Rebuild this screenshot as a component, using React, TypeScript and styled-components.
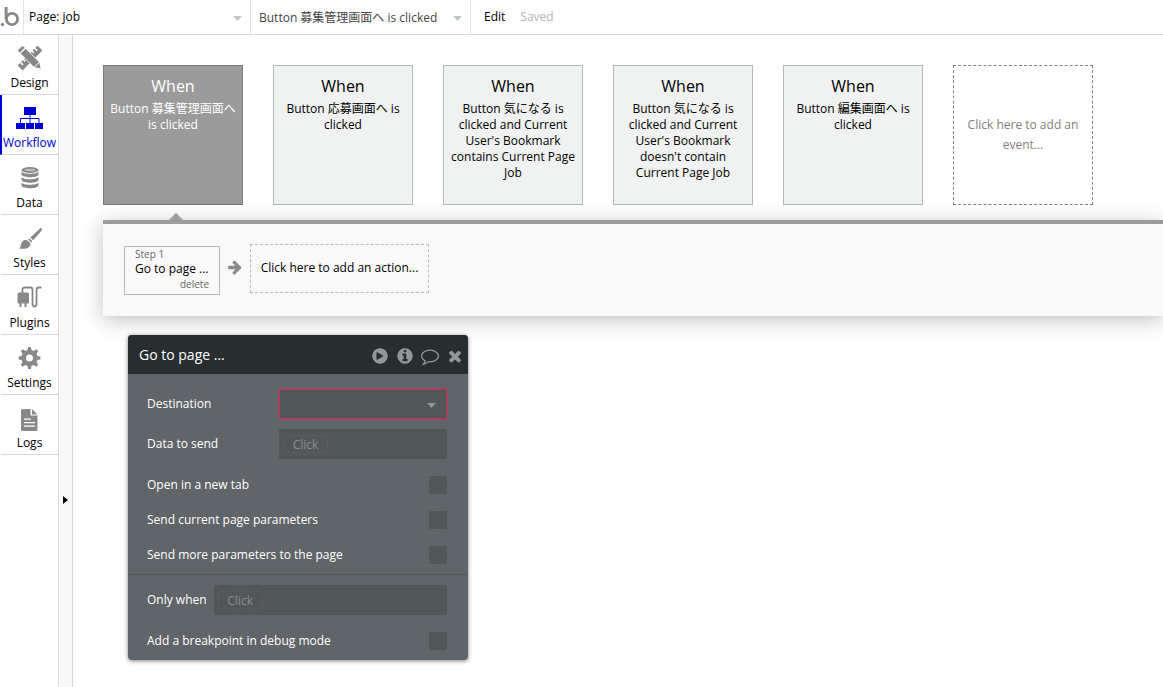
import React from "react";
import styled, { createGlobalStyle, css } from "styled-components";

const GlobalStyle = createGlobalStyle`
  *, *::before, *::after { box-sizing: border-box; }
  body {
    margin: 0;
    background: #fff;
    color: #000;
    font: 12px/16px "Open Sans", "Noto Sans CJK JP", sans-serif;
  }
  button, input, select { font: inherit; color: inherit; margin: 0; }
  button { padding: 0; border: 0; background: none; cursor: pointer; }
  svg { display: block; }
`;

const Page = styled.div`
  display: flex;
  flex-direction: column;
  min-height: 100vh;
`;

/* Top bar */

const TopBar = styled.header`
  display: flex;
  align-items: stretch;
  height: 35px;
  border-bottom: 1px solid #d7d7d7;
`;

const LogoLink = styled.a`
  width: 24px;
  padding-top: 7px;
  border-right: 1px solid #e5e5e5;
`;

const Picker = styled.div<{ $width: number }>`
  display: flex;
  align-items: center;
  position: relative;
  width: ${(p) => p.$width}px;
  border-right: 1px solid #e5e5e5;
`;

const PickerSelect = styled.select<{ $muted?: boolean }>`
  appearance: none;
  width: 100%;
  height: 100%;
  padding: ${(p) => (p.$muted ? "2px 24px 0 8px" : "0 24px 0 5px")};
  border: 0;
  background: transparent;
  color: ${(p) => (p.$muted ? "#444" : "#000")};
`;

const PickerCaret = styled.svg`
  position: absolute;
  right: 8px;
  top: 16px;
  pointer-events: none;
`;

const EditButton = styled.button`
  padding: 0 15px 0 13px;
`;

const SaveState = styled.span`
  align-self: center;
  color: #b3b3b3;
`;

/* Side navigation */

const Body = styled.div`
  display: flex;
  flex: 1;
`;

const SideNav = styled.nav`
  flex: none;
  width: 59px;
  border-right: 1px solid #d7d7d7;
`;

const NavItem = styled.a<{ $active?: boolean }>`
  display: flex;
  flex-direction: column;
  align-items: center;
  justify-content: space-between;
  height: 60px;
  padding: 9px 1px 3px 0;
  border-bottom: 1px solid #d7d7d7;
  border-left: 2px solid ${(p) => (p.$active ? "#0000d5" : "transparent")};
  color: ${(p) => (p.$active ? "#0000d5" : "#000")};
  text-decoration: none;
  white-space: nowrap;

  svg { color: ${(p) => (p.$active ? "#0000d5" : "#888")}; }
`;

const Gutter = styled.button`
  display: flex;
  flex: none;
  align-items: flex-start;
  width: 14px;
  padding: 461px 0 0 4px;
  border-right: 1px solid #d7d7d7;
  background: #f8f8f8;
`;

/* Workflow canvas */

const Canvas = styled.main`
  flex: 1;
  min-width: 0;
  padding: 30px 0 27px 30px;
  overflow: hidden;
`;

const EventRow = styled.div`
  display: flex;
  gap: 30px;
`;

const eventBox = css`
  flex: none;
  width: 140px;
  height: 140px;
  text-align: center;
`;

const EventCard = styled.button<{ $selected?: boolean }>`
  ${eventBox}
  display: flex;
  flex-direction: column;
  align-items: center;
  gap: 5px;
  padding: 10px 4px;
  border: 1px solid ${(p) => (p.$selected ? "#7b7b7b" : "#b0babc")};
  background: ${(p) => (p.$selected ? "#9b9b9b" : "#f0f2f1")};
  color: ${(p) => (p.$selected ? "#fff" : "#000")};
`;

const EventTitle = styled.span`
  font-size: 16px;
  line-height: 20px;
`;

const AddEvent = styled.button`
  ${eventBox}
  padding: 0 12px;
  border: 1px dashed #808080;
  color: #808080;
  line-height: 20px;
`;

const Actions = styled.section`
  position: relative;
  display: flex;
  align-items: flex-start;
  height: 96px;
  margin-top: 15px;
  padding: 20px 20px 0 21px;
  border-top: 4px solid #9b9b9b;
  background: #f9f9f9;
  box-shadow: 0 4px 20px rgba(0, 0, 0, 0.25);
`;

const Pointer = styled.svg`
  position: absolute;
  left: 66px;
  top: -11px;
`;

const Step = styled.div`
  display: flex;
  flex-direction: column;
  width: 96px;
  height: 49px;
  margin-top: 2px;
  padding: 0 10px;
  border: 1px solid #b0babc;
`;

const StepNote = styled.span`
  color: #666;
  font-size: 10px;
  line-height: 14px;
`;

const StepName = styled.button`
  text-align: left;
  white-space: nowrap;
`;

const DeleteButton = styled.button`
  align-self: flex-end;
  color: #666;
  font-size: 10px;
  line-height: 14px;
`;

const AddAction = styled.button`
  width: 179px;
  height: 49px;
  padding-bottom: 2px;
  border: 1px dashed #b5bdbd;
  white-space: nowrap;
`;

/* Property editor */

const Editor = styled.section`
  width: 340px;
  margin: 19px 0 0 25px;
  border-radius: 4px;
  overflow: hidden;
  background: #606569;
  color: #fff;
  box-shadow: 0 1px 4px rgba(0, 0, 0, 0.5);
`;

const EditorHeader = styled.header`
  display: flex;
  align-items: center;
  height: 39px;
  padding: 0 4px 0 11px;
  background: #272e30;
`;

const EditorTitle = styled.h2`
  flex: 1;
  margin: 0;
  font-size: 14px;
  font-weight: 400;
  line-height: 20px;
`;

const HeaderButtons = styled.div`
  display: flex;
  gap: 7px;
  padding-top: 2px;
  color: #8f999b;
`;

const Group = styled.div`
  padding: 15px 21px 2px 19px;
  & + & { padding-top: 10px; border-top: 1px solid #54595c; }
`;

const Row = styled.div`
  display: flex;
  align-items: center;
  justify-content: space-between;
  gap: 7px;
`;

const FieldRow = styled(Row)`
  height: 30px;
  margin-bottom: 8px;
  & + & { margin-top: 10px; }
`;

const TickRow = styled(Row)`
  height: 35px;
`;

const Field = styled.div<{ $invalid?: boolean; $fill?: boolean }>`
  position: relative;
  display: flex;
  align-items: center;
  ${(p) => (p.$fill ? "flex: 1;" : "width: 168px;")}
  height: 30px;
  padding: 0 4px;
  border: ${(p) => (p.$invalid ? "1px solid #f0184c" : "0")};
  border-radius: 1px;
  background: #515659;
`;

const FieldSelect = styled.select`
  appearance: none;
  width: 100%;
  height: 100%;
  border: 0;
  background: transparent;
`;

const FieldCaret = styled.svg`
  position: absolute;
  right: 10px;
  top: 13px;
  pointer-events: none;
`;

const Expression = styled.input`
  width: 45px;
  height: 18px;
  padding: 0;
  border: 1px dashed #5c6164;
  border-radius: 3px;
  background: transparent;
  text-align: center;
  &::placeholder { color: #8c8f91; opacity: 1; }
`;

const Tick = styled.input`
  appearance: none;
  width: 18px;
  height: 18px;
  border-radius: 1px;
  background: #515659;
  position: relative;
  &:checked::after {
    content: "✓";
    position: absolute;
    inset: 0;
    text-align: center;
  }
`;

const Glyph = ({ d, size = 18 }: { d: string; size?: number }) => (
  <svg width={size} height={size} viewBox="0 0 1792 1792" fill="currentColor" aria-hidden="true">
    <path d={d} />
  </svg>
);

const disc =
  "q0 209-103 385.5t-279.5 279.5-385.5 103-385.5-103-279.5-279.5-103-385.5 103-385.5 279.5-279.5 385.5-103 385.5 103 279.5 279.5 103 385.5z";
const glyphs = {
  play: "M1216 896q0-37-32-55l-544-320q-31-19-64-1-32 19-32 56v640q0 37 32 56 16 8 32 8 17 0 32-9l544-320q32-18 32-55zm448 0" + disc,
  info:
    "M1152 1376v-160q0-14-9-23t-23-9h-96v-512q0-14-9-23t-23-9h-320q-14 0-23 9t-9 23v160q0 14 9 23t23 9h96v320h-96q-14 0-23 9t-9 23v160q0 14 9 23t23 9h448q14 0 23-9t9-23zm-128-896v-160q0-14-9-23t-23-9h-192q-14 0-23 9t-9 23v160q0 14 9 23t23 9h192q14 0 23-9t9-23zm640 416" + disc,
  comment:
    "M896 384q-204 0-381.5 69.5t-282 187.5-104.5 255q0 112 71.5 213.5t201.5 175.5l87 50-27 96q-24 91-70 172 152-63 275-171l43-38 57 6q69 8 130 8 204 0 381.5-69.5t282-187.5 104.5-255-104.5-255-282-187.5-381.5-69.5zm896 512q0 174-120 321.5t-326 233-450 85.5q-70 0-145-8-198 175-460 242-49 14-114 22h-5q-15 0-27-10.5t-16-27.5v-1q-3-4-.5-12t2-10 4.5-9.5l6-9 7-8.5 8-9q7-8 31-34.5t34.5-38 31-39.5 32.5-51 27-59 26-76q-157-89-247.5-220t-90.5-281q0-174 120-321.5t326-233 450-85.5 450 85.5 326 233 120 321.5z",
  close:
    "M1490 1322q0 40-28 68l-136 136q-28 28-68 28t-68-28l-294-294-294 294q-28 28-68 28t-68-28l-136-136q-28-28-28-68t28-68l294-294-294-294q-28-28-28-68t28-68l136-136q28-28 68-28t68 28l294 294 294-294q28-28 68-28t68 28l136 136q28 28 28 68t-28 68l-294 294 294 294q28 28 28 68z",
  arrow:
    "M1600 960q0 54-37 91l-651 651q-39 37-91 37-51 0-90-37l-75-75q-38-38-38-91t38-91l293-293h-704q-52 0-84.5-37.5t-32.5-90.5v-128q0-53 32.5-90.5t84.5-37.5h704l-293-294q-38-36-38-90t38-90l75-75q38-38 90-38 53 0 91 38l651 651q37 35 37 90z",
};

const ArrowMark = styled.span`
  width: 30px;
  padding: 15px 0 0 7px;
  color: #888;
`;

const NavIcon = ({ children }: { children: React.ReactNode }) => (
  <svg width="28" height="28" viewBox="0 0 28 28" fill="currentColor" aria-hidden="true">
    {children}
  </svg>
);

const DesignIcon = () => (
  <NavIcon>
    <g transform="rotate(-45 14 14)">
      <path d="M0 11.500Q0 10.500 1 10.500H3.500V14H5V10.500H7.500V13H9V10.500H19.500V13H21V10.500H23.500V14H25V10.500H27Q28 10.500 28 11.500V16.500Q28 17.500 27 17.500H1Q0 17.500 0 16.500z" />
    </g>
    <g transform="rotate(45 14 14)">
      <path d="M4 10.200H23.500V17.800H4z" stroke="#fff" strokeWidth=".8" />
      <path d="M0 12Q0 10.500 1.500 10.500H3V17.500H1.500Q0 17.500 0 16zM24 10.800L29 14L24 17.200z" />
    </g>
  </NavIcon>
);

const WorkflowIcon = () => (
  <NavIcon>
    <path d="M8 3h12v8H8zM0 19h9v6H0zM10 19h8v6h-8zM19 19h8v6h-8z" />
    <path d="M4.500 19v-4.500h18.500V19M14 11v8" fill="none" stroke="currentColor" />
  </NavIcon>
);

const DataIcon = () => (
  <NavIcon>
    <ellipse cx="14" cy="6" rx="8.500" ry="3" />
    <ellipse cx="14" cy="6" rx="5.500" ry="1.200" fill="#bbb" />
    <path d="M5.500 7.500c1.500 3 15.500 3 17 0v3c-1 3.700-16 3.700-17 0zM5.500 13c1.500 3 15.500 3 17 0v3c-1 3.700-16 3.700-17 0zM5.500 18.500c1.500 3 15.500 3 17 0v3c-1 3.700-16 3.700-17 0z" />
  </NavIcon>
);

const StylesIcon = () => (
  <NavIcon>
    <path d="M25.500 4.200c1 .9.300 1.900-.7 3.200l-7.500 8.800-3-2.700 8.700-8c1.100-1 1.700-1.900 2.500-1.300zM13.400 14.400l3 2.700-1.200 1.300-3.200-2.800zM11.200 16.300l3.200 2.900c.5 3.700-3.400 6.500-11.400 5.300 2.400-1.400 1.200-4 3.200-6.700 1.300-1.700 3.100-2.200 5-1.500z" />
  </NavIcon>
);

const PluginsIcon = () => (
  <NavIcon>
    <path d="M1.500 10q0-1.500 1.500-1.500h8.500Q13 8.500 13 10v8.500q0 1-1 1h-1.500V23h-2v-3.500H5.500V23h-2v-3.500h-1q-1 0-1-1z" />
    <path d="M6.500 9V5.500Q6.500 3.500 8.500 3.500H14.500Q16.500 3.500 16.500 5.500V20Q16.500 22.500 18.500 22.500T20.500 20V6Q20.500 3.500 23 3.500H25.500" fill="none" stroke="currentColor" strokeWidth="1.800" />
  </NavIcon>
);

const SettingsIcon = () => (
  <NavIcon>
    <path
      fillRule="evenodd"
      d="M11.500 6l.6-3h2.800l.6 3 2.200.9 2.500-1.700 2 2-1.700 2.500.9 2.200 3 .6v2.900l-3 .6-.9 2.200 1.700 2.500-2 2-2.500-1.700-2.200.9-.6 3h-2.800l-.6-3-2.200-.9-2.500 1.700-2-2 1.700-2.500-.9-2.200-3-.6v-2.900l3-.6.9-2.200-1.700-2.500 2-2 2.500 1.700zM13.500 10.500a3.500 3.500 0 1 0 0 7 3.500 3.500 0 0 0 0-7z"
    />
  </NavIcon>
);

const LogsIcon = () => (
  <NavIcon>
    <path fillRule="evenodd" d="M5 6.500Q5 5 6.500 5H14.500v6.500H21.500V25.500Q21.500 27 20 27H6.500Q5 27 5 25.500zM8 14.500v1.200h7v-1.200zM8 18v1.200h11V18zM8 21.500v1.200h11v-1.200z" />
    <path d="M16 5l5.500 5.500H16z" />
  </NavIcon>
);

const navItems = [
  { label: "Design", Icon: DesignIcon },
  { label: "Workflow", Icon: WorkflowIcon },
  { label: "Data", Icon: DataIcon },
  { label: "Styles", Icon: StylesIcon },
  { label: "Plugins", Icon: PluginsIcon },
  { label: "Settings", Icon: SettingsIcon },
  { label: "Logs", Icon: LogsIcon },
];

const events = [
  "Button 募集管理画面へ is clicked",
  "Button 応募画面へ is clicked",
  "Button 気になる is clicked and Current User's Bookmark contains Current Page Job",
  "Button 気になる is clicked and Current User's Bookmark doesn't contain Current Page Job",
  "Button 編集画面へ is clicked",
];

const options = [
  { id: "new-tab", label: "Open in a new tab" },
  { id: "current-params", label: "Send current page parameters" },
  { id: "more-params", label: "Send more parameters to the page" },
];

const headerActions = [
  { label: "Play", d: glyphs.play },
  { label: "Info", d: glyphs.info },
  { label: "Comment", d: glyphs.comment },
  { label: "Close", d: glyphs.close },
];

export default function App() {
  return (
    <Page>
      <GlobalStyle />
      <TopBar>
        <LogoLink href="#" aria-label="Home">
          <svg width="20" height="20" viewBox="0 0 20 20" aria-hidden="true">
            <circle cx="2.500" cy="17.500" r="1.700" fill="#888" />
            <path d="M4.500 0v12" stroke="#f6cfae" />
            <path d="M6.300 0v12" stroke="#888" strokeWidth="2.600" />
            <circle cx="12" cy="12" r="5.600" fill="none" stroke="#888" strokeWidth="2.800" />
          </svg>
        </LogoLink>
        <Picker $width={227}>
          <PickerSelect aria-label="Page">
            <option>Page: job</option>
          </PickerSelect>
          <PickerCaret width="9" height="5" viewBox="0 0 9 5"><path d="M0 0h9L4.500 5z" fill="#bcc6cf" /></PickerCaret>
        </Picker>
        <Picker $width={220}>
          <PickerSelect $muted aria-label="Event">
            <option>Button 募集管理画面へ is clicked</option>
          </PickerSelect>
          <PickerCaret width="9" height="5" viewBox="0 0 9 5"><path d="M0 0h9L4.500 5z" fill="#bcc6cf" /></PickerCaret>
        </Picker>
        <EditButton>Edit</EditButton>
        <SaveState>Saved</SaveState>
      </TopBar>
      <Body>
        <SideNav>
          {navItems.map(({ label, Icon }) => (
            <NavItem key={label} href="#" $active={label === "Workflow"}>
              <Icon />
              {label}
            </NavItem>
          ))}
        </SideNav>
        <Gutter aria-label="Expand panel">
          <svg width="5" height="8" viewBox="0 0 5 8"><path d="M0 0l5 4-5 4z" fill="#000" /></svg>
        </Gutter>
        <Canvas>
          <EventRow>
            {events.map((text, i) => (
              <EventCard key={text} $selected={i === 0}>
                <EventTitle>When</EventTitle>
                <span>{text}</span>
              </EventCard>
            ))}
            <AddEvent>Click here to add an event...</AddEvent>
          </EventRow>
          <Actions>
            <Pointer width="14" height="7" viewBox="0 0 14 7"><path d="M0 7l7-7 7 7z" fill="#9b9b9b" /></Pointer>
            <Step>
              <StepNote>Step 1</StepNote>
              <StepName>Go to page ...</StepName>
              <DeleteButton>delete</DeleteButton>
            </Step>
            <ArrowMark><Glyph d={glyphs.arrow} size={16} /></ArrowMark>
            <AddAction>Click here to add an action...</AddAction>
          </Actions>
          <Editor>
            <EditorHeader>
              <EditorTitle>Go to page ...</EditorTitle>
              <HeaderButtons>
                {headerActions.map(({ label, d }) => (
                  <button key={label} aria-label={label}><Glyph d={d} /></button>
                ))}
              </HeaderButtons>
            </EditorHeader>
            <Group>
              <FieldRow>
                <label htmlFor="destination">Destination</label>
                <Field $invalid>
                  <FieldSelect id="destination"><option></option></FieldSelect>
                  <FieldCaret width="9" height="5" viewBox="0 0 9 5"><path d="M0 0h9L4.500 5z" fill="#8f999b" /></FieldCaret>
                </Field>
              </FieldRow>
              <FieldRow>
                <label htmlFor="data">Data to send</label>
                <Field><Expression id="data" placeholder="Click" /></Field>
              </FieldRow>
              {options.map(({ id, label }) => (
                <TickRow key={id}>
                  <label htmlFor={id}>{label}</label>
                  <Tick type="checkbox" id={id} />
                </TickRow>
              ))}
            </Group>
            <Group>
              <FieldRow>
                <label htmlFor="only-when">Only when</label>
                <Field $fill><Expression id="only-when" placeholder="Click" /></Field>
              </FieldRow>
              <TickRow>
                <label htmlFor="breakpoint">Add a breakpoint in debug mode</label>
                <Tick type="checkbox" id="breakpoint" />
              </TickRow>
            </Group>
          </Editor>
        </Canvas>
      </Body>
    </Page>
  );
}
